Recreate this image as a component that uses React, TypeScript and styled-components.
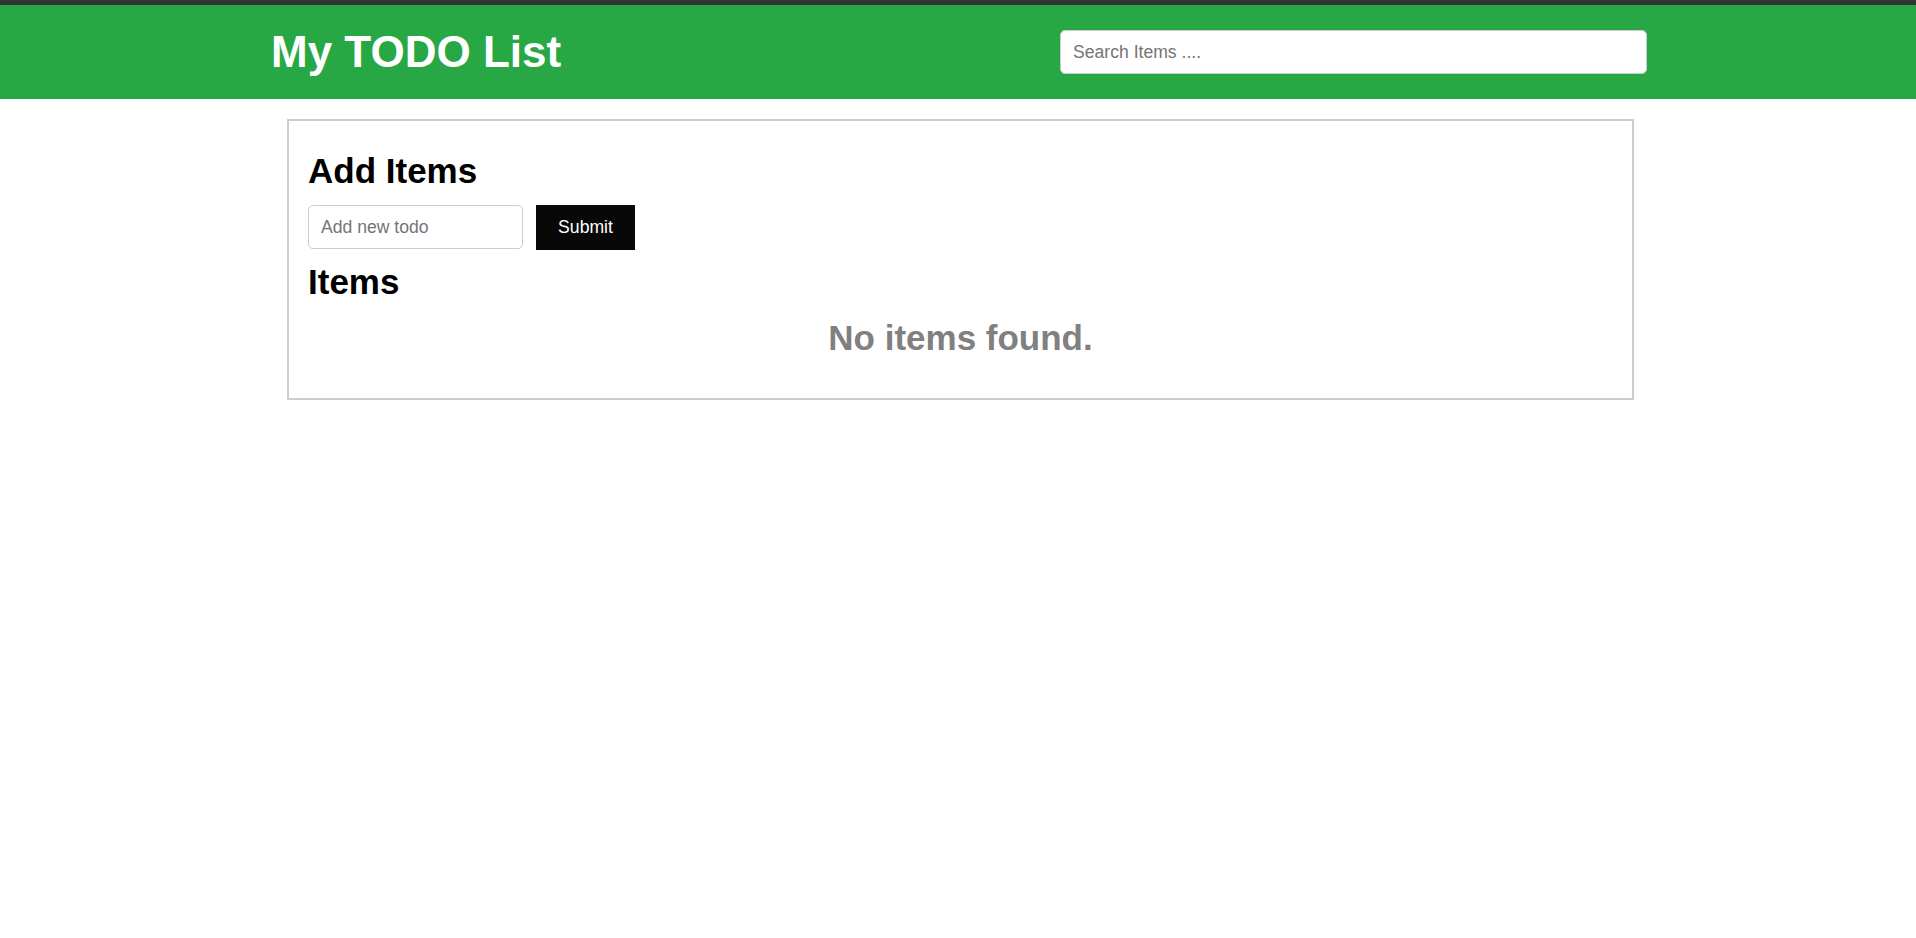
import React, { useState } from 'react';
import styled, { createGlobalStyle } from 'styled-components';

const GlobalStyle = createGlobalStyle`
  * {
    box-sizing: border-box;
  }
  body {
    margin: 0;
    background: #ffffff;
    font-family: 'Liberation Sans', Arial, sans-serif;
  }
`;

const Header = styled.header`
  height: 99px;
  padding-left: 2px;
  background: #28a745;
  border-top: 5px solid #333333;
`;

const HeaderInner = styled.div`
  width: 1376px;
  height: 100%;
  margin: 0 auto;
  display: flex;
  align-items: center;
  justify-content: space-between;
`;

const Title = styled.h1`
  margin: 0;
  color: #ffffff;
  font-size: 44px;
  font-weight: 700;
`;

const TextInput = styled.input<{ $width: number }>`
  width: ${(p) => p.$width}px;
  height: 44px;
  padding: 0 12px;
  border: 1px solid #cccccc;
  border-radius: 5px;
  background: #ffffff;
  font-family: inherit;
  font-size: 17.6px;
  color: #222222;
  outline: none;
  &::placeholder {
    color: #757575;
  }
`;

const Main = styled.main`
  display: flex;
  justify-content: center;
  padding: 20px 0 0 5px;
`;

const Card = styled.section`
  width: 1347px;
  border: 2px solid #cccccc;
  padding: 30px 19px 40px;
`;

const Heading = styled.h2<{ $gap?: number }>`
  margin: ${(p) => p.$gap || 0}px 0 0;
  font-size: 35px;
  font-weight: 700;
  color: #000000;
`;

const AddRow = styled.form`
  display: flex;
  align-items: flex-start;
  gap: 13px;
  margin-top: 14px;
`;

const SubmitButton = styled.button`
  width: 99px;
  height: 45px;
  border: none;
  background: #080808;
  color: #ffffff;
  font-family: inherit;
  font-size: 17.6px;
  cursor: pointer;
`;

const Empty = styled.p`
  margin: 16px 0 0;
  text-align: center;
  font-size: 35px;
  font-weight: 700;
  color: #808080;
`;

export default function App() {
  const [search, setSearch] = useState('');
  const [todo, setTodo] = useState('');
  const [items, setItems] = useState<string[]>([]);

  const visible = items.filter((i) =>
    i.toLowerCase().includes(search.toLowerCase())
  );

  const handleSubmit = (e: React.FormEvent) => {
    e.preventDefault();
    if (!todo.trim()) return;
    setItems([...items, todo.trim()]);
    setTodo('');
  };

  return (
    <>
      <GlobalStyle />
      <Header>
        <HeaderInner>
          <Title>My TODO List</Title>
          <TextInput
            $width={587}
            placeholder="Search Items ...."
            value={search}
            onChange={(e) => setSearch(e.target.value)}
          />
        </HeaderInner>
      </Header>
      <Main>
        <Card>
          <Heading>Add Items</Heading>
          <AddRow onSubmit={handleSubmit}>
            <TextInput
              $width={215}
              placeholder="Add new todo"
              value={todo}
              onChange={(e) => setTodo(e.target.value)}
            />
            <SubmitButton type="submit">Submit</SubmitButton>
          </AddRow>
          <Heading $gap={12}>Items</Heading>
          {visible.length === 0 ? (
            <Empty>No items found.</Empty>
          ) : (
            visible.map((item, i) => <div key={i}>{item}</div>)
          )}
        </Card>
      </Main>
    </>
  );
}
